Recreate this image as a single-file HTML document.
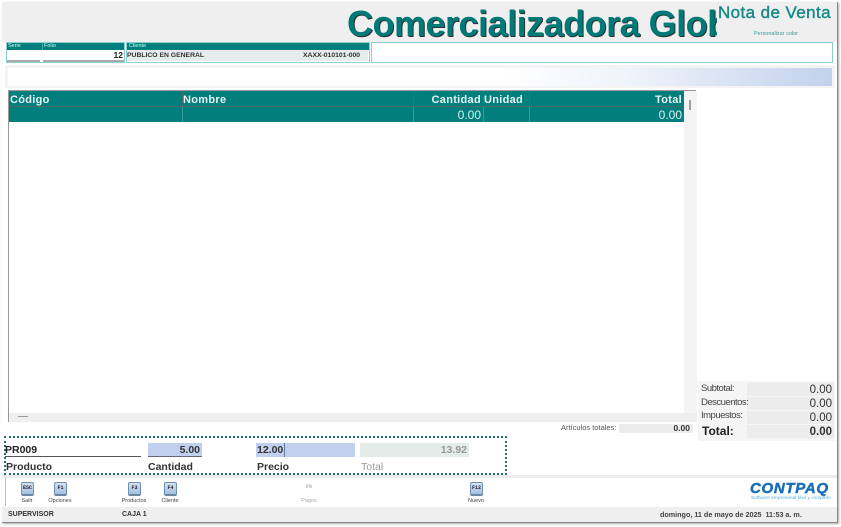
<!DOCTYPE html>
<html><head><meta charset="utf-8">
<style>
html,body{margin:0;padding:0;background:#fff;}
body{width:841px;height:527px;position:relative;overflow:hidden;font-family:"Liberation Sans",sans-serif;}
div,span{position:absolute;white-space:nowrap;box-sizing:border-box;}
.h{color:#e8f5f4;font-weight:bold;font-size:11px;top:94px;line-height:12px;letter-spacing:.3px;}
.sep{top:91px;width:1px;height:16px;background:#4a6a6a;}
.sep2{top:107px;width:1px;height:15px;background:#3a9a9a;}
.k{width:13px;height:14px;background:linear-gradient(#d4e2f2,#a4c0e0);border:1px solid #6f8fae;border-bottom:2px solid #6c86a2;border-radius:2px;font:bold 5px/11px "Liberation Mono",monospace;color:#223;text-align:center;top:482px;}
.kl{font-size:5.5px;line-height:7px;color:#444;top:498px;transform:translateX(-50%);}
.lb{font-size:9.5px;letter-spacing:-.5px;color:#444;left:701px;line-height:12px;}
.v{left:747px;width:87px;height:13px;background:#ececec;color:#333;font-size:11.5px;line-height:14px;text-align:right;padding-right:2px;}
</style></head><body>
<div style="left:2px;top:2px;width:836px;height:521px;background:#fff;border-right:1px solid #888;border-bottom:1px solid #888;box-shadow:1px 1px 2px #aaa;"></div>
<!-- header -->
<div style="left:2px;top:2px;width:835px;height:40px;background:#efefef;"></div>
<div style="left:347px;top:3px;width:370px;height:40px;overflow:hidden;">
<span style="left:0;top:0;font:bold 36px/41px 'Liberation Sans',sans-serif;color:#007a78;text-shadow:1px 1px 0 #2a3433;letter-spacing:-.5px;">Comercializadora Global</span></div>
<div style="left:718px;top:3px;font-size:17px;line-height:20px;color:#168a88;letter-spacing:.4px;-webkit-text-stroke:.4px #168a88;">Nota de Venta</div>
<div style="left:754px;top:31px;font-size:5.5px;line-height:7px;color:#3a9a9a;">Personalizar color</div>
<!-- serie/folio -->
<div style="left:6px;top:42px;width:119px;height:21px;background:#fff;border:1px solid #8ccfcc;"></div>
<div style="left:7px;top:43px;width:117px;height:7px;background:#007f7c;"></div>
<div style="left:8px;top:43px;font-size:5.5px;line-height:7px;color:#cfe;">Serie</div>
<div style="left:44px;top:43px;font-size:5.5px;line-height:7px;color:#cfe;">Folio</div>
<div style="left:42px;top:43px;width:1px;height:7px;background:#4aa;"></div>
<div style="left:7px;top:60px;width:33px;height:2px;background:#aaa;"></div>
<div style="left:43px;top:60px;width:81px;height:2px;background:#aaa;"></div>
<div style="left:100px;top:50px;width:23px;text-align:right;font:bold 8.5px/11px 'Liberation Sans',sans-serif;color:#222;">12</div>
<!-- cliente -->
<div style="left:126px;top:42px;width:244px;height:21px;background:#fff;border:1px solid #8ccfcc;"></div>
<div style="left:127px;top:43px;width:242px;height:7px;background:#007f7c;"></div>
<div style="left:129px;top:43px;font-size:5.5px;line-height:7px;color:#cfe;">Cliente</div>
<div style="left:127px;top:50px;width:241px;height:11px;background:#e4ecec;"></div>
<div style="left:127px;top:50px;font:bold 6.8px/11px 'Liberation Sans',sans-serif;color:#333;">PUBLICO EN GENERAL</div>
<div style="left:303px;top:50px;font:bold 6.8px/11px 'Liberation Sans',sans-serif;color:#333;">XAXX-010101-000</div>
<!-- right box -->
<div style="left:371px;top:42px;width:462px;height:21px;background:#fff;border:1px solid #8ccfcc;"></div>
<!-- gradient bar -->
<div style="left:5px;top:65px;width:830px;height:23px;background:#f4f4f4;"></div>
<div style="left:8px;top:68px;width:824px;height:18px;background:linear-gradient(90deg,#fff 0,#fff 60%,#eef2fa 76%,#c2d2ec 100%);"></div>
<!-- grid -->
<div style="left:8px;top:90px;width:688px;height:334px;background:#fff;border-top:1px solid #999;border-left:1px solid #999;"></div>
<div style="left:684px;top:91px;width:13px;height:322px;background:#f4f4f4;"></div>
<div style="left:689px;top:100px;width:2px;height:10px;background:#a0a0a0;"></div>
<div style="left:9px;top:91px;width:675px;height:16px;background:#007f7c;border-bottom:1px solid #4a6a6a;"></div>
<div style="left:9px;top:107px;width:675px;height:15px;background:#007f7c;"></div>
<div class="sep" style="left:182px"></div><div class="sep" style="left:413px"></div><div class="sep" style="left:483px"></div><div class="sep" style="left:529px"></div>
<div class="sep2" style="left:182px"></div><div class="sep2" style="left:413px"></div><div class="sep2" style="left:483px"></div><div class="sep2" style="left:529px"></div>
<div class="h" style="left:10px">Código</div>
<div class="h" style="left:183px">Nombre</div>
<div class="h" style="left:414px;width:67px;text-align:right">Cantidad</div>
<div class="h" style="left:484px">Unidad</div>
<div class="h" style="left:530px;width:152px;text-align:right">Total</div>
<div style="left:414px;top:108px;width:67px;text-align:right;color:#d8f0ee;font-size:12px;line-height:14px;">0.00</div>
<div style="left:530px;top:108px;width:152px;text-align:right;color:#d8f0ee;font-size:12px;line-height:14px;">0.00</div>
<!-- h scrollbar -->
<div style="left:9px;top:413px;width:688px;height:9px;background:#efefef;"></div>
<div style="left:18px;top:416px;width:10px;height:1px;background:#999;"></div>
<!-- articulos -->
<div style="left:0;top:422px;width:695px;height:15px;background:#fff;"></div>
<div style="left:561px;top:423px;font-size:7.5px;line-height:10px;color:#555;">Artículos totales:</div>
<div style="left:619px;top:424px;width:74px;height:9px;background:#ececec;"></div>
<div style="left:619px;top:423px;width:71px;text-align:right;font:bold 8.5px/11px 'Liberation Sans',sans-serif;color:#333;">0.00</div>
<!-- totals -->
<div style="left:698px;top:381px;width:137px;height:60px;background:#f5f5f5;"></div>
<div class="v" style="top:383px">0.00</div><div class="lb" style="top:383px">Subtotal:</div>
<div class="v" style="top:397px">0.00</div><div class="lb" style="top:397px">Descuentos:</div>
<div class="v" style="top:411px">0.00</div><div class="lb" style="top:410px">Impuestos:</div>
<div style="left:702px;top:424px;font:bold 12px/14px 'Liberation Sans',sans-serif;color:#222;">Total:</div>
<div class="v" style="top:425px;font-weight:bold;">0.00</div>
<!-- input band -->
<div style="left:4px;top:436px;width:503px;height:39px;background:#fff;border:2px dotted #23706a;"></div>
<div style="left:5px;top:443px;font:bold 10.5px/14px 'Liberation Sans',sans-serif;color:#222;">PR009</div>
<div style="left:5px;top:456px;width:136px;height:1px;background:#555;"></div>
<div style="left:6px;top:461px;font:bold 10.5px/13px 'Liberation Sans',sans-serif;color:#333;">Producto</div>
<div style="left:148px;top:443px;width:54px;height:14px;background:#c0d0ee;border-bottom:1px solid #667;"></div>
<div style="left:148px;top:443px;width:52px;text-align:right;font:bold 10.5px/14px 'Liberation Sans',sans-serif;color:#333;">5.00</div>
<div style="left:148px;top:461px;font:bold 10.5px/13px 'Liberation Sans',sans-serif;color:#333;">Cantidad</div>
<div style="left:256px;top:443px;width:99px;height:14px;background:#c0d0ee;"></div>
<div style="left:257px;top:443px;font:bold 10.5px/14px 'Liberation Sans',sans-serif;color:#333;">12.00</div>
<div style="left:284px;top:443px;width:1px;height:14px;background:#667a99;"></div>
<div style="left:257px;top:461px;font:bold 10.5px/13px 'Liberation Sans',sans-serif;color:#333;">Precio</div>
<div style="left:360px;top:443px;width:109px;height:14px;background:#e4ecea;"></div>
<div style="left:360px;top:443px;width:107px;text-align:right;font:bold 10.5px/14px 'Liberation Sans',sans-serif;color:#999;">13.92</div>
<div style="left:361px;top:461px;font-size:10.5px;line-height:13px;color:#999;">Total</div>
<!-- toolbar -->
<div style="left:2px;top:475px;width:835px;height:3px;background:#ececec;"></div>
<div style="left:5px;top:478px;width:1px;height:28px;background:#bbb;"></div>
<div class="k" style="left:21px">ESC</div><div class="kl" style="left:27px">Salir</div>
<div class="k" style="left:54px">F1</div><div class="kl" style="left:60px">Opciones</div>
<div class="k" style="left:128px">F3</div><div class="kl" style="left:134px">Productos</div>
<div class="k" style="left:164px">F4</div><div class="kl" style="left:170px">Cliente</div>
<div style="left:306px;top:484px;font:bold 5px/7px 'Liberation Mono',monospace;color:#aaa;">F6</div><div class="kl" style="left:309px;color:#aaa;">Pagos</div>
<div class="k" style="left:470px">F12</div><div class="kl" style="left:476px">Nuevo</div>
<div style="left:750px;top:480px;font:italic bold 15px/18px 'Liberation Sans',sans-serif;color:#1b6fb5;letter-spacing:.7px;-webkit-text-stroke:.5px #1b6fb5;">CONTPAQ</div>
<div style="left:751px;top:495px;font-size:4.8px;line-height:7px;color:#58b0e0;">Software empresarial fácil y completo</div>
<!-- status -->
<div style="left:2px;top:507px;width:835px;height:15px;background:#efefef;"></div>
<div style="left:8px;top:510px;font:bold 7px/10px 'Liberation Sans',sans-serif;color:#333;">SUPERVISOR</div>
<div style="left:122px;top:510px;font:bold 7px/10px 'Liberation Sans',sans-serif;color:#333;">CAJA 1</div>
<div style="left:660px;top:510px;font:bold 7.2px/10px 'Liberation Sans',sans-serif;color:#444;white-space:pre;">domingo, 11 de mayo de 2025  11:53 a. m.</div>
</body></html>
